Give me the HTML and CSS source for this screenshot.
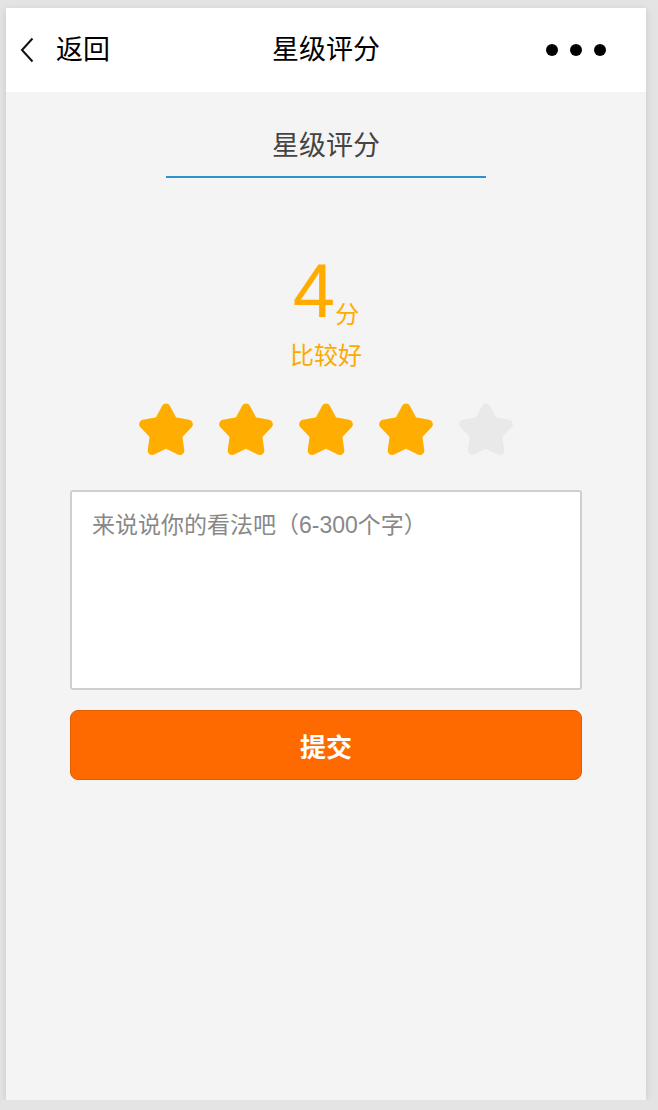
FILE: index.html
```html
<!DOCTYPE html>
<html lang="zh-CN">
<head>
<meta charset="utf-8">
<title>星级评分</title>
<link rel="stylesheet" href="styles.css">
</head>
<body>
<div class="phone">
  <header class="nav">
    <div class="nav-left">
      <svg class="chev" width="14" height="26" viewBox="0 0 14 26"><polyline points="12.5,1.5 2,13 12.5,24.5" fill="none" stroke="#111" stroke-width="2"/></svg>
      <span class="back">返回</span>
    </div>
    <div class="nav-title">星级评分</div>
    <div class="nav-right">
      <span class="dot"></span><span class="dot"></span><span class="dot"></span>
    </div>
  </header>
  <main class="content">
    <div class="tab">星级评分</div>
    <div class="score">4<span class="unit">分</span></div>
    <div class="level">比较好</div>
    <div class="stars">
      <svg class="star on" width="56" height="53" viewBox="0 0 56 53"><polygon points="28,5 35.23,18.55 50.35,21.24 39.7,32.3 41.81,47.51 28,40.8 14.19,47.51 16.3,32.3 5.65,21.24 20.77,18.55"/></svg>
      <svg class="star on" width="56" height="53" viewBox="0 0 56 53"><polygon points="28,5 35.23,18.55 50.35,21.24 39.7,32.3 41.81,47.51 28,40.8 14.19,47.51 16.3,32.3 5.65,21.24 20.77,18.55"/></svg>
      <svg class="star on" width="56" height="53" viewBox="0 0 56 53"><polygon points="28,5 35.23,18.55 50.35,21.24 39.7,32.3 41.81,47.51 28,40.8 14.19,47.51 16.3,32.3 5.65,21.24 20.77,18.55"/></svg>
      <svg class="star on" width="56" height="53" viewBox="0 0 56 53"><polygon points="28,5 35.23,18.55 50.35,21.24 39.7,32.3 41.81,47.51 28,40.8 14.19,47.51 16.3,32.3 5.65,21.24 20.77,18.55"/></svg>
      <svg class="star off" width="56" height="53" viewBox="0 0 56 53"><polygon points="28,5 35.23,18.55 50.35,21.24 39.7,32.3 41.81,47.51 28,40.8 14.19,47.51 16.3,32.3 5.65,21.24 20.77,18.55"/></svg>
    </div>
    <textarea class="comment" placeholder="来说说你的看法吧（6-300个字）"></textarea>
    <button class="submit" type="button">提交</button>
  </main>
</div>
</body>
</html>
```
FILE: styles.css
```css
html, body {
  margin: 0;
  padding: 0;
}
body {
  background: #e4e4e4;
  font-family: "Liberation Sans", "Noto Sans CJK SC", sans-serif;
}
.phone {
  margin: 8px 0 0 6px;
  width: 640px;
  height: 1092px;
  background: #f4f4f4;
  box-shadow: 0 2px 8px rgba(0, 0, 0, 0.12);
}
.nav {
  height: 84px;
  background: #fff;
  display: grid;
  grid-template-columns: 1fr auto 1fr;
  align-items: center;
  color: #000;
}
.nav-left {
  display: flex;
  align-items: center;
  gap: 22px;
  padding-left: 14px;
}
.chev {
  display: block;
}
.back, .nav-title {
  font-size: 27px;
  line-height: 30px;
}
.nav-right {
  display: flex;
  justify-content: flex-end;
  gap: 12px;
  padding-right: 40px;
}
.dot {
  width: 12px;
  height: 12px;
  border-radius: 50%;
  background: #000;
}
.content {
  display: flex;
  flex-direction: column;
  align-items: center;
  padding: 0 64px;
}
.tab {
  width: 320px;
  margin-top: 39px;
  padding-bottom: 15px;
  border-bottom: 2px solid #2b93d0;
  text-align: center;
  font-size: 27px;
  line-height: 30px;
  color: #444;
}
.score {
  margin-top: 75px;
  font-size: 76px;
  line-height: 76px;
  color: #ffab00;
  text-align: center;
}
.unit {
  font-size: 24px;
  line-height: 24px;
  vertical-align: -6px;
}
.level {
  margin-top: 12px;
  font-size: 24px;
  line-height: 30px;
  color: #fbab00;
}
.stars {
  margin-top: 32px;
  display: flex;
  gap: 24px;
}
.star {
  display: block;
}
.star polygon {
  stroke-width: 9;
  stroke-linejoin: round;
}
.star.on polygon {
  fill: #ffad00;
  stroke: #ffad00;
}
.star.off polygon {
  fill: #e9e9e9;
  stroke: #e9e9e9;
}
.comment {
  margin-top: 34px;
  width: 512px;
  height: 200px;
  box-sizing: border-box;
  border: 2px solid #cfcfcf;
  border-radius: 3px;
  background: #fff;
  padding: 18px 20px;
  font-family: "Liberation Sans", "Noto Sans CJK SC", sans-serif;
  font-size: 23px;
  line-height: 30px;
  color: #333;
  resize: none;
  outline: none;
}
.comment::placeholder {
  color: #888;
}
.submit {
  margin-top: 20px;
  width: 512px;
  height: 70px;
  box-sizing: border-box;
  border: 1px solid #e25c00;
  border-radius: 8px;
  background: #ff6a00;
  color: #fff;
  font-family: "Liberation Sans", "Noto Sans CJK SC", sans-serif;
  font-size: 26px;
  font-weight: bold;
  padding: 0;
}
```
